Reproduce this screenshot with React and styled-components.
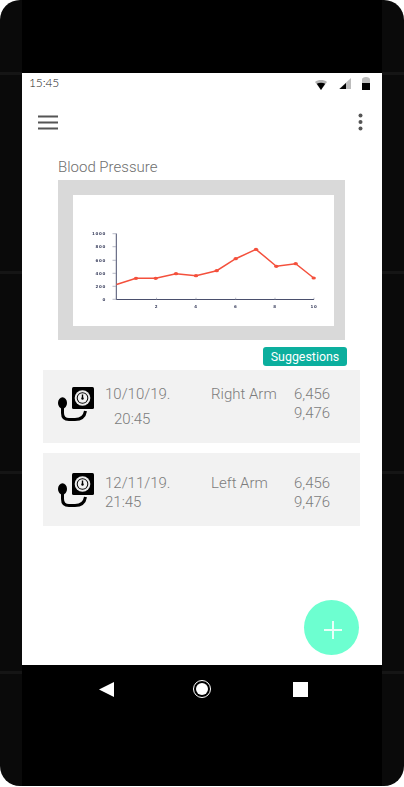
import React from 'react';
import styled, { createGlobalStyle } from 'styled-components';

const GlobalStyle = createGlobalStyle`
  html, body {
    margin: 0;
    padding: 0;
    background: #fff;
  }
`;

const Phone = styled.div`
  position: relative;
  width: 404px;
  height: 786px;
  background: #0a0a0a;
  border-radius: 20px;
  overflow: hidden;
  display: flex;
  justify-content: center;
`;

// thin seams on the side bezels
const Seam = styled.div`
  position: absolute;
  left: 0;
  right: 0;
  top: ${(props) => props.$top}px;
  height: 3px;
  background: #151515;
`;

const Body = styled.div`
  position: relative;
  width: 360px;
  height: 100%;
  background: #000;
  display: flex;
  flex-direction: column;
  font-family: Roboto, sans-serif;
`;

const TopBlack = styled.div`
  height: 73px;
  flex: none;
`;

const Screen = styled.div`
  position: relative;
  height: 592px;
  flex: none;
  background: #fff;
  display: flex;
  flex-direction: column;
`;

const StatusBar = styled.div`
  height: 20px;
  display: flex;
  align-items: center;
  justify-content: space-between;
  padding: 0 12px 0 7px;
`;

const Clock = styled.span`
  font-family: Lato, sans-serif;
  font-size: 12px;
  font-weight: 300;
  letter-spacing: -0.1px;
  color: #1a1a1a;
  margin-bottom: 2px;
`;

const StatusIcons = styled.div`
  display: flex;
  align-items: flex-end;
  gap: 11.5px;
  height: 13px;
`;

const Toolbar = styled.div`
  height: 44px;
  margin-top: 7px;
  display: flex;
  align-items: center;
  justify-content: space-between;
  padding: 0 19px 0 16px;
`;

const Content = styled.div`
  display: flex;
  flex-direction: column;
  padding: 0 22px 0 21px;
`;

const ChartTitle = styled.div`
  margin: 13px 0 0 15px;
  font-size: 15px;
  line-height: 20px;
  font-weight: 300;
  color: #6e6e6e;
`;

const ChartFrame = styled.div`
  margin: 3px 15px 0 15px;
  height: 160px;
  background: #d9d9d9;
  padding: 15px 11px 14px 15px;
  box-sizing: border-box;
`;

const ChartPaper = styled.div`
  height: 131px;
  background: #fff;
`;

const ChartSvg = styled.svg`
  display: block;
  filter: blur(0.35px);
`;

const SuggestRow = styled.div`
  display: flex;
  justify-content: flex-end;
  margin: 7px 13px 4px 0;
`;

const SuggestButton = styled.button`
  width: 84px;
  height: 19px;
  border: 0;
  padding: 0;
  border-radius: 3px;
  background: #0caf9e;
  color: #fff;
  font-family: Roboto, sans-serif;
  font-size: 12.4px;
`;

const Reading = styled.div`
  height: 73px;
  margin-bottom: 10px;
  background: #f2f2f2;
  display: grid;
  grid-template-columns: 62px 106px 83px 1fr;
  padding-top: ${(props) => props.$top}px;
  box-sizing: border-box;
  font-size: 15px;
  line-height: 19px;
  font-weight: 300;
  color: #7c7c7c;
`;

const IconCell = styled.div`
  padding-left: 15px;
  margin-top: ${(props) => props.$top}px;
`;

const CuffSvg = styled.svg`
  display: block;
`;

const Time = styled.div`
  margin-top: ${(props) => (props.$shift ? '6px' : '0')};
  margin-left: ${(props) => (props.$shift ? '9px' : '0')};
`;

const Fab = styled.div`
  position: absolute;
  right: 23px;
  bottom: 10px;
  width: 55px;
  height: 55px;
  padding: 5px 0 0 3px;
  box-sizing: border-box;
  border-radius: 50%;
  background: #6dffd0;
  display: flex;
  align-items: center;
  justify-content: center;
`;

const NavBar = styled.div`
  height: 65px;
  flex: none;
  display: flex;
  align-items: flex-start;
  gap: 78px;
  padding: 15px 0 0 75px;
  box-sizing: border-box;
`;

const NavSlot = styled.div`
  width: 18px;
  height: 18px;
  margin-left: ${(props) => props.$nudge || 0}px;
  display: flex;
  align-items: center;
  justify-content: center;
`;

const CuffIcon = () => (
  <CuffSvg width="37" height="35" viewBox="0 0 37 35">
    <rect x="14" y="0" width="22" height="22" rx="1.500" fill="#000" />
    <circle cx="24.500" cy="11" r="7.800" fill="#ececec" />
    <circle cx="24.500" cy="11" r="5.800" fill="#000" />
    <circle cx="24.500" cy="11" r="4.800" fill="#f2f2f2" />
    <path d="M24.500 7.500v3.500" stroke="#000" strokeWidth="1.400" />
    <circle cx="24.500" cy="11.500" r="1.200" fill="#000" />
    <ellipse cx="4.500" cy="16" rx="4.500" ry="5.800" fill="#000" />
    <path d="M4.500 20v6c0 4.500 2.500 6.500 6.500 6.500h6c5.500 0 9.500-2.500 10.500-8.500" fill="none" stroke="#000" strokeWidth="3" />
  </CuffSvg>
);

const readings = [
  { date: '10/10/19.', time: '20:45', arm: 'Right Arm', shift: true, top: 15, iconTop: 2 },
  { date: '12/11/19.', time: '21:45', arm: 'Left Arm', shift: false, top: 21, iconTop: -1 },
];

const points = [
  [116.500, 284.500], [136, 278.300], [155.700, 278.300], [176, 273.700], [196, 275.700], [216.700, 270.700],
  [235.700, 258.700], [256, 249.300], [276.300, 266.300], [295.700, 263.700], [313.700, 278],
];
const yLabels = [['1000', 233.700], ['800', 246.700], ['600', 260.300], ['400', 273.300], ['200', 286.300], ['0', 299.300]];
const xLabels = [['2', 156.500], ['4', 196], ['6', 235.700], ['8', 275], ['10', 314]];

// page coordinates, shifted to the white paper inside the svg viewBox
const Chart = () => (
  <ChartSvg width="261" height="131" viewBox="73 195 261 131">
    <g fill="#3d4260" fontFamily="DejaVu Sans, sans-serif" fontSize="4" fontWeight="700" letterSpacing="0.7">
      {yLabels.map(([label, y]) => (
        <text key={label} x="106" y={y + 1.400} textAnchor="end">{label}</text>
      ))}
      {xLabels.map(([label, x]) => (
        <text key={label} x={x} y="307.500" textAnchor="middle">{label}</text>
      ))}
    </g>
    <path d="M116.300 233.500V299.500H314" fill="none" stroke="#4a4f6d" strokeWidth="1" />
    <g stroke="#9a9cb0" strokeWidth="0.700">
      {yLabels.map(([label, y]) => <path key={label} d={`M112.500 ${y}H116`} />)}
      {xLabels.map(([label, x]) => <path key={label} d={`M${x} 299.500v-1.800`} />)}
    </g>
    <polyline points={points.map((p) => p.join(',')).join(' ')} fill="none" stroke="#f4503c" strokeWidth="1.500" />
    {points.slice(1).map(([x, y]) => (
      <ellipse key={x} cx={x} cy={y} rx="2.200" ry="1.600" fill="#f4503c" />
    ))}
  </ChartSvg>
);

const App = () => (
  <>
    <GlobalStyle />
    <Phone>
      <Seam $top={72} />
      <Seam $top={271} />
      <Seam $top={471} />
      <Seam $top={671} />
      <Body>
        <TopBlack />
        <Screen>
          <StatusBar>
            <Clock>15:45</Clock>
            <StatusIcons>
              <svg width="12" height="10" viewBox="0 0 12 10">
                <path d="M0 2C3-.6 9-.6 12 2L6 10Z" fill="#b5b5b5" />
                <path d="M1.800 3.800c2.500-1.300 5.900-1.300 8.400 0L6 10Z" fill="#000" />
              </svg>
              <svg width="12" height="12" viewBox="0 0 12 12">
                <path d="M12 0V11H0Z" fill="#bdbdbd" />
                <path d="M7 5V11H0.500Z" fill="#000" />
              </svg>
              <svg width="8" height="13" viewBox="0 0 8 13">
                <path d="M0 2.500C0 1 1.500 0 4 0S8 1 8 2.500V13H0Z" fill="#bdbdbd" />
                <rect x="0" y="6" width="8" height="7" fill="#000" />
              </svg>
            </StatusIcons>
          </StatusBar>
          <Toolbar>
            <svg width="20" height="15" viewBox="0 0 20 15">
              <path d="M0 1.500H20M0 7.500H20M0 13.500H20" stroke="#555" strokeWidth="2" />
            </svg>
            <svg width="5" height="18" viewBox="0 0 5 18">
              <circle cx="2.500" cy="2.500" r="2" fill="#555" />
              <circle cx="2.500" cy="9" r="2" fill="#555" />
              <circle cx="2.500" cy="15.500" r="2" fill="#555" />
            </svg>
          </Toolbar>
          <Content>
            <ChartTitle>Blood Pressure</ChartTitle>
            <ChartFrame>
              <ChartPaper>
                <Chart />
              </ChartPaper>
            </ChartFrame>
            <SuggestRow>
              <SuggestButton>Suggestions</SuggestButton>
            </SuggestRow>
            {readings.map((r) => (
              <Reading key={r.date} $top={r.top}>
                <IconCell $top={r.iconTop}><CuffIcon /></IconCell>
                <div>
                  {r.date}
                  <Time $shift={r.shift}>{r.time}</Time>
                </div>
                <div>{r.arm}</div>
                <div>6,456<br />9,476</div>
              </Reading>
            ))}
          </Content>
          <Fab>
            <svg width="20" height="20" viewBox="0 0 20 20">
              <path d="M10 1V19M1 10H19" stroke="#e9fff8" strokeWidth="2" />
            </svg>
          </Fab>
        </Screen>
        <NavBar>
          <NavSlot>
            <svg width="15" height="15" viewBox="0 0 15 15"><path d="M15 0V15L0 7.500Z" fill="#fff" /></svg>
          </NavSlot>
          <NavSlot>
            <svg width="18" height="18" viewBox="0 0 18 18">
              <circle cx="9" cy="9" r="8.500" fill="none" stroke="#fff" strokeWidth="1" />
              <circle cx="9" cy="9" r="6" fill="#fff" />
            </svg>
          </NavSlot>
          <NavSlot $nudge={2}>
            <svg width="15" height="15" viewBox="0 0 15 15"><rect width="15" height="15" fill="#fff" /></svg>
          </NavSlot>
        </NavBar>
      </Body>
    </Phone>
  </>
);

export default App;
